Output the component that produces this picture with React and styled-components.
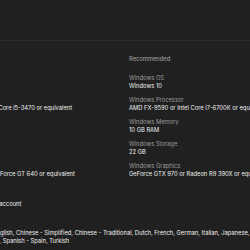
import React from "react";
import styled, { createGlobalStyle } from "styled-components";

const Global = createGlobalStyle`
  html, body { margin: 0; padding: 0; background: #202020; overflow: hidden; }
  body { font-family: Inter, "Noto Sans", sans-serif; -webkit-font-smoothing: antialiased; }
`;

const Page = styled.div`
  width: 250px;
  height: 250px;
  overflow: hidden;
  background: #202020;
`;

const TopBand = styled.div`
  height: 40px;
  border-bottom: 1px solid #2c2c2c;
`;

const Content = styled.div`
  margin-left: -63px;
  width: 380px;
  padding-top: 14px;
`;

const Columns = styled.div`
  display: grid;
  grid-template-columns: 163px 163px;
  column-gap: 29px;
`;

const Column = styled.div`
  display: flex;
  flex-direction: column;
`;

const Heading = styled.div`
  font-size: 5.8px;
  line-height: 8px;
  color: #a9a9a9;
  margin-bottom: 11px;
  white-space: nowrap;
  visibility: ${(p) => (p.$hidden ? "hidden" : "visible")};
`;

const Group = styled.div`
  display: flex;
  flex-direction: column;
  margin-bottom: 6px;
`;

const Label = styled.div`
  font-size: 5.8px;
  line-height: 8px;
  color: #9c9c9c;
  white-space: nowrap;
  visibility: ${(p) => (p.$hidden ? "hidden" : "visible")};
`;

const Value = styled.div`
  font-size: 5.8px;
  line-height: 8px;
  color: #f0f0f0;
  white-space: nowrap;
`;

const Footer = styled.div`
  margin-left: 41px;
  display: flex;
  flex-direction: column;
`;

const Note = styled.p`
  margin: 16px 0 0;
  font-size: 5.8px;
  line-height: 8px;
  color: #f0f0f0;
  white-space: nowrap;
`;

const Languages = styled.p`
  margin: 21px 0 0;
  font-size: 5.8px;
  line-height: 8px;
  color: #f0f0f0;
  white-space: nowrap;
`;

const minimum = [
  ["Windows OS", ""],
  ["Windows Processor", "AMD FX-8350 or Intel Core i5-3470 or equivalent"],
  ["Windows Memory", ""],
  ["Windows Storage", ""],
  ["Windows Graphics", "Radeon HD 7750 or GeForce GT 640 or equivalent"],
];

const recommended = [
  ["Windows OS", "Windows 10"],
  ["Windows Processor", "AMD FX-9590 or Intel Core i7-6700K or equivalent"],
  ["Windows Memory", "10 GB RAM"],
  ["Windows Storage", "22 GB"],
  ["Windows Graphics", "GeForce GTX 970 or Radeon R9 390X or equivalent"],
];

export default function App() {
  return (
    <Page>
      <Global />
      <TopBand />
      <Content>
        <Columns>
          <Column>
            <Heading $hidden>Minimum</Heading>
            {minimum.map(([l, v]) => (
              <Group key={l}>
                <Label $hidden>{l}</Label>
                <Value>{v || "\u00a0"}</Value>
              </Group>
            ))}
          </Column>
          <Column>
            <Heading>Recommended</Heading>
            {recommended.map(([l, v]) => (
              <Group key={l}>
                <Label>{l}</Label>
                <Value>{v}</Value>
              </Group>
            ))}
          </Column>
        </Columns>
        <Footer>
          <Note>Ubisoft account</Note>
          <Languages>
            Text: English, Chinese - Simplified, Chinese - Traditional, Dutch, French, German, Italian, Japanese, Korean, Polish, Portuguese - Brazil,
            <br />
            Russian, Spanish - Spain, Turkish
          </Languages>
        </Footer>
      </Content>
    </Page>
  );
}
